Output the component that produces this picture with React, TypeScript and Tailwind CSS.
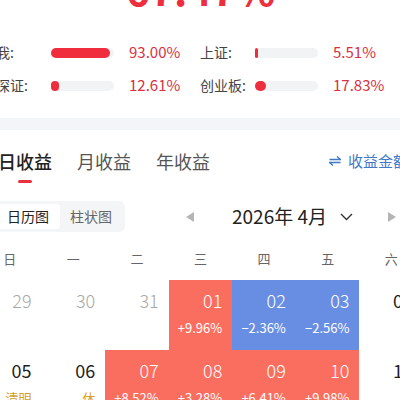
import React from 'react';

const stats = [
  { label: '我:', value: 93.0 },
  { label: '上证:', value: 5.51 },
  { label: '深证:', value: 12.61 },
  { label: '创业板:', value: 17.83 },
];

type Cell = {
  day: string;
  kind: 'muted' | 'plain' | 'up' | 'down';
  sub?: string;
  tag?: string;
};

const weekdays = ['日', '一', '二', '三', '四', '五', '六'];

const weeks: Cell[][] = [
  [
    { day: '29', kind: 'muted' },
    { day: '30', kind: 'muted' },
    { day: '31', kind: 'muted' },
    { day: '01', kind: 'up', sub: '+9.96%' },
    { day: '02', kind: 'down', sub: '−2.36%' },
    { day: '03', kind: 'down', sub: '−2.56%' },
    { day: '04', kind: 'plain' },
  ],
  [
    { day: '05', kind: 'plain', tag: '清明' },
    { day: '06', kind: 'plain', tag: '休' },
    { day: '07', kind: 'up', sub: '+8.52%' },
    { day: '08', kind: 'up', sub: '+3.28%' },
    { day: '09', kind: 'up', sub: '+6.41%' },
    { day: '10', kind: 'up', sub: '+9.98%' },
    { day: '11', kind: 'plain' },
  ],
];

const cellBg = {
  muted: 'bg-white',
  plain: 'bg-white',
  up: 'bg-[#fa6e5f]',
  down: 'bg-[#688ee4]',
};

const dayColor = {
  muted: 'text-[#a8a8a8] font-light',
  plain: 'text-[#1f1f1f] font-normal',
  up: 'text-white font-light',
  down: 'text-white font-light',
};

export default function App() {
  return (
    <div className="w-[400px] h-[400px] overflow-hidden bg-white font-['Noto_Sans_CJK_SC',sans-serif]">
      <div className="w-[445px] -ml-[22px]">
        {/* 总收益率 */}
        <div className="-mt-[32px] h-[41px] text-center text-[41px] leading-[41px] font-semibold text-[#ee2e3c]">
          67.47%
        </div>

        {/* 对比 */}
        <div className="mt-[27px] pl-[18px] grid grid-cols-[204px_204px]">
          {stats.map((s) => (
            <div key={s.label} className="h-[33px] flex items-center">
              <span className="w-[55px] text-[14px] text-[#444]">{s.label}</span>
              <div className="w-[63px] h-[10px] rounded-full bg-[#f2f3f5]">
                <div
                  className="h-full rounded-full bg-[#f02d3c]"
                  style={{ width: `${Math.max(3, (s.value / 100) * 63)}px` }}
                />
              </div>
              <span className="ml-[15px] text-[15px] text-[#d93040]">{s.value.toFixed(2)}%</span>
            </div>
          ))}
        </div>

        <div className="mt-[16px] h-[12px] bg-[#f4f5f8]" />

        {/* 收益 tabs */}
        <div className="pt-[20px] pr-[15px] pl-[20px] flex items-start">
          <div className="flex gap-[25px]">
            <div className="flex flex-col items-center">
              <span className="text-[18px] leading-[22px] font-medium text-[#222]">日收益</span>
              <span className="mt-[8px] w-[14px] h-[3px] rounded-full bg-[#e8303e]" />
            </div>
            <span className="text-[18px] leading-[22px] text-[#555]">月收益</span>
            <span className="text-[18px] leading-[22px] text-[#555]">年收益</span>
          </div>
          <div className="ml-auto h-[22px] flex items-center gap-[7px] text-[15px] text-[#4179c6]">
            <svg width="12" height="10" viewBox="0 0 12 10" fill="none" stroke="#4179c6" strokeWidth="1.3">
              <path d="M0.5 3.5H11.5L8 0.5" />
              <path d="M11.5 6.5H0.5L4 9.5" />
            </svg>
            <span>收益金额</span>
          </div>
        </div>

        {/* 视图切换 + 月份 */}
        <div className="mt-[18px] pl-[15px] flex items-center">
          <div className="h-[31px] p-[3px] rounded-md bg-[#f4f5f7] flex text-[14px]">
            <span className="px-[11px] flex items-center rounded bg-white text-[#222]">日历图</span>
            <span className="px-[10px] flex items-center text-[#666]">柱状图</span>
          </div>
          <div className="ml-auto mr-[27px] flex items-center">
            <svg width="8" height="10" viewBox="0 0 8 10">
              <path d="M8 0V10L0 5Z" fill="#b5b5b5" />
            </svg>
            <span className="ml-[38px] text-[19px] text-[#222]">2026年 4月</span>
            <svg className="ml-[13px]" width="13" height="8" viewBox="0 0 13 8" fill="none" stroke="#333" strokeWidth="1.4">
              <path d="M1 1L6.5 6.5L12 1" />
            </svg>
            <svg className="ml-[35px]" width="8" height="10" viewBox="0 0 8 10">
              <path d="M0 0V10L8 5Z" fill="#b5b5b5" />
            </svg>
          </div>
        </div>

        {/* 星期 */}
        <div className="mt-[19px] grid grid-cols-7 text-[13px] leading-[16px] text-[#666]">
          {weekdays.map((w) => (
            <span key={w} className="text-center">{w}</span>
          ))}
        </div>

        {/* 日历 */}
        <div className="mt-[13px] grid grid-cols-7">
          {weeks.flat().map((c) => (
            <div key={c.day} className={`h-[70px] pr-[10px] pt-[10px] flex flex-col items-end ${cellBg[c.kind]}`}>
              <span className={`text-[18px] leading-[20px] ${dayColor[c.kind]}`}>{c.day}</span>
              {c.sub && <span className="mt-[10px] text-[13px] leading-[16px] text-white">{c.sub}</span>}
              {c.tag && <span className="mt-[10px] text-[13px] leading-[16px] text-[#d6a02a]">{c.tag}</span>}
            </div>
          ))}
        </div>
      </div>
    </div>
  );
}
